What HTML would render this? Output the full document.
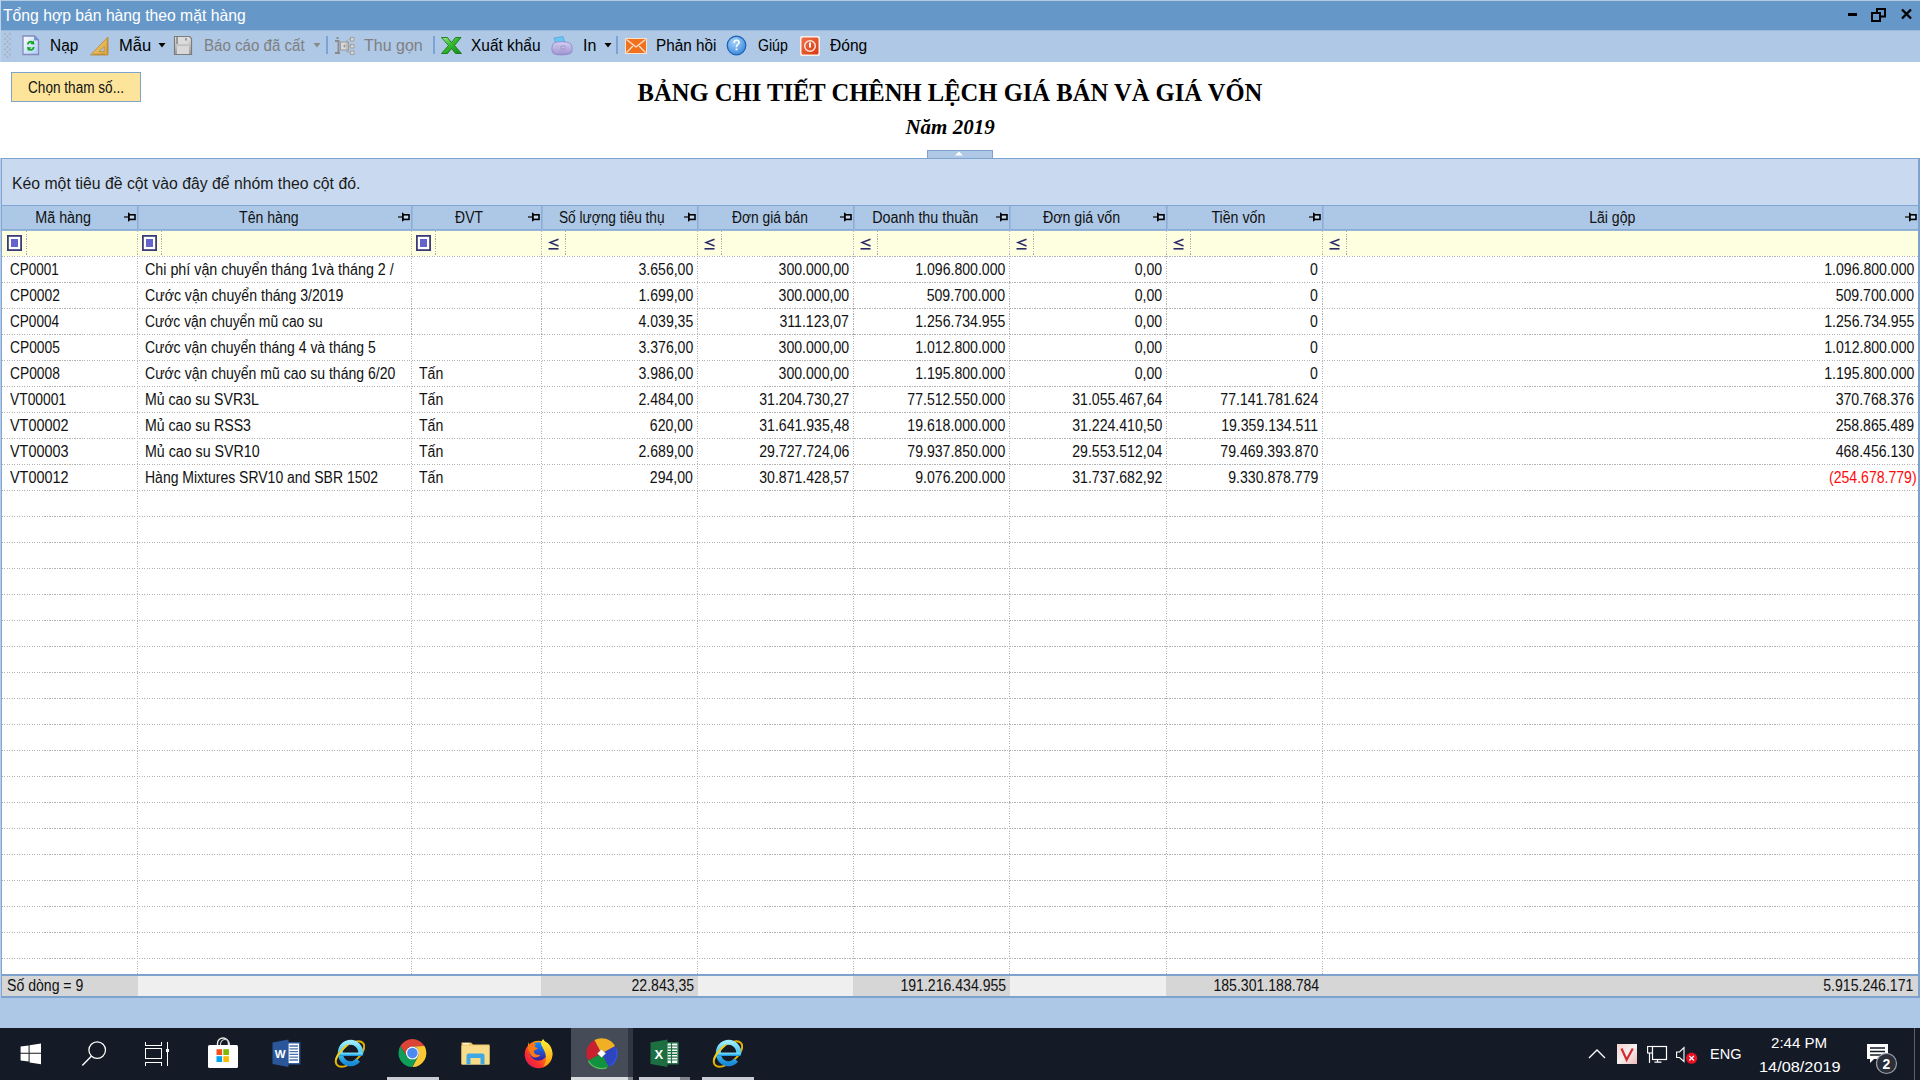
<!DOCTYPE html><html><head><meta charset="utf-8"><title>Tổng hợp bán hàng theo mặt hàng</title><style>
*{margin:0;padding:0;box-sizing:border-box}
html,body{width:1920px;height:1080px;overflow:hidden;background:#fff;font-family:"Liberation Sans", sans-serif;}
.a{position:absolute}
.t{position:absolute;white-space:nowrap;line-height:20px;height:20px}
</style></head><body>
<div class="a" style="left:0;top:0;width:1920px;height:1px;background:#b4cbe6"></div>
<div class="a" style="left:0;top:1px;width:1920px;height:29px;background:#6597c8"></div>
<div class="t" style="left:3px;top:5.28px;text-align:left;font-size:16.5px;color:#fff;"><span style="display:inline-block;transform:scaleX(0.952);transform-origin:0 50%">Tổng hợp bán hàng theo mặt hàng</span></div>
<div class="a" style="left:1848px;top:13px;width:9px;height:3px;background:#000"></div>
<svg class="a" style="left:1870px;top:7px" width="17" height="15" viewBox="0 0 17 15"><rect x="7" y="2" width="8" height="7.5" fill="none" stroke="#000" stroke-width="2"/><rect x="2" y="6" width="8" height="8" fill="#6597c8" stroke="#000" stroke-width="2"/></svg>
<svg class="a" style="left:1900px;top:8px" width="13" height="12" viewBox="0 0 13 12"><path d="M2 1.5L11 10.5M11 1.5L2 10.5" stroke="#000" stroke-width="2.4"/></svg>
<div class="a" style="left:0;top:30px;width:1920px;height:32px;background:#aec8e6"></div>
<div class="a" style="left:0;top:30px;width:1920px;height:1px;background:#9db9dc"></div>
<svg class="a" style="left:0;top:0" width="14" height="62"><rect x="4.2" y="33.0" width="1.6" height="1.6" fill="#a39c98" opacity="0.65"/><rect x="9.2" y="33.0" width="1.6" height="1.6" fill="#a39c98" opacity="0.65"/><rect x="6.7" y="35.6" width="1.6" height="1.6" fill="#a39c98" opacity="0.65"/><rect x="4.2" y="38.2" width="1.6" height="1.6" fill="#a39c98" opacity="0.65"/><rect x="9.2" y="38.2" width="1.6" height="1.6" fill="#a39c98" opacity="0.65"/><rect x="6.7" y="40.8" width="1.6" height="1.6" fill="#a39c98" opacity="0.65"/><rect x="4.2" y="43.4" width="1.6" height="1.6" fill="#a39c98" opacity="0.65"/><rect x="9.2" y="43.4" width="1.6" height="1.6" fill="#a39c98" opacity="0.65"/><rect x="6.7" y="46.0" width="1.6" height="1.6" fill="#a39c98" opacity="0.65"/><rect x="4.2" y="48.6" width="1.6" height="1.6" fill="#a39c98" opacity="0.65"/><rect x="9.2" y="48.6" width="1.6" height="1.6" fill="#a39c98" opacity="0.65"/><rect x="6.7" y="51.2" width="1.6" height="1.6" fill="#a39c98" opacity="0.65"/><rect x="4.2" y="53.8" width="1.6" height="1.6" fill="#a39c98" opacity="0.65"/><rect x="9.2" y="53.8" width="1.6" height="1.6" fill="#a39c98" opacity="0.65"/><rect x="6.7" y="56.4" width="1.6" height="1.6" fill="#a39c98" opacity="0.65"/></svg>
<svg class="a" style="left:22px;top:35px" width="18" height="21" viewBox="0 0 18 21"><defs><linearGradient id="dg" x1="0" y1="0" x2="1" y2="1"><stop offset="0" stop-color="#ffffff"/><stop offset="1" stop-color="#a8cdf5"/></linearGradient></defs><path d="M1 1H12.5L16.5 5V19.5H1Z" fill="url(#dg)" stroke="#8589bd" stroke-width="1.3"/><path d="M12.5 1V5H16.5" fill="#5a9ee8" stroke="#8589bd" stroke-width="0.8"/><path d="M5 9.5C5 6 9 5 11 6.5L11.5 5L12.5 9.5L8 9L9.6 7.8C8 7 6.8 8 6.8 9.5Z" fill="#12a21c"/><path d="M12.5 12C12.5 15.5 8.5 16.5 6.5 15L6 16.5L5 12L9.5 12.5L7.9 13.7C9.5 14.5 10.7 13.5 10.7 12Z" fill="#12a21c"/></svg>
<div class="t" style="left:50px;top:36.46px;text-align:left;font-size:16px;color:#000;"><span style="display:inline-block;transform:scaleX(0.9643);transform-origin:0 50%">Nạp</span></div>
<svg class="a" style="left:90px;top:36px" width="19" height="20" viewBox="0 0 19 20"><defs><linearGradient id="rg" x1="0" y1="0" x2="1" y2="1"><stop offset="0" stop-color="#f6d77a"/><stop offset="1" stop-color="#d9a13c"/></linearGradient></defs><path d="M18 1V19H0.5Z" fill="url(#rg)" stroke="#b98a3a" stroke-width="0.9"/><path d="M14.2 10.5V15.5H9.2Z" fill="#aec8e6" stroke="#b98a3a" stroke-width="0.8"/><path d="M16.5 4H18M16.5 6H18M16.5 8H18M16.5 10H18M16.5 12H18M16.5 14H18M16.5 16H18M4 17.5V19M6 17.5V19M8 17.5V19M10 17.5V19M12 17.5V19M14 17.5V19" stroke="#9c6a22" stroke-width="0.6"/></svg>
<div class="t" style="left:119px;top:36.46px;text-align:left;font-size:16px;color:#000;"><span style="display:inline-block;transform:scaleX(1.0345);transform-origin:0 50%">Mẫu</span></div>
<svg class="a" style="left:158px;top:43px" width="9" height="5"><path d="M0.5 0H7.5L4 4.5Z" fill="#000"/></svg>
<svg class="a" style="left:173px;top:35px" width="20" height="21" viewBox="0 0 20 21"><defs><linearGradient id="sg" x1="0" y1="0" x2="0" y2="1"><stop offset="0" stop-color="#e8e8e8"/><stop offset="1" stop-color="#9a9a9a"/></linearGradient></defs><path d="M1.5 1.5H16.5L18.5 3.5V19.5H1.5Z" fill="url(#sg)" stroke="#7c7c7c" stroke-width="1.2"/><rect x="3" y="2" width="2" height="7" fill="#9a9a9a"/><rect x="5.5" y="2" width="9.5" height="7" fill="#dcdcdc"/><rect x="12" y="3" width="2" height="2.5" fill="#9a9a9a"/><rect x="4" y="11" width="12" height="8" fill="#d8d8d8"/></svg>
<div class="t" style="left:204px;top:36.46px;text-align:left;font-size:16px;color:#7f7f7f;"><span style="display:inline-block;transform:scaleX(0.9429);transform-origin:0 50%">Báo cáo đã cất</span></div>
<svg class="a" style="left:313px;top:43px" width="9" height="5"><path d="M0.5 0H7.5L4 4.5Z" fill="#8a8a8a"/></svg>
<div class="a" style="left:326px;top:36px;width:2px;height:18px;background:#7ba3d6"></div>
<svg class="a" style="left:334px;top:36px" width="21" height="20" viewBox="0 0 21 20"><rect x="2.5" y="1" width="2" height="2" fill="#8a8a8a"/><path d="M1 5H4.5V17H1M1 17H6" fill="none" stroke="#8a8a8a" stroke-width="1.8"/><rect x="6.5" y="6" width="8" height="8" fill="#d8d8d8" stroke="#9a9a9a"/><path d="M9 10H12M10.5 8.5V11.5" stroke="#9a9a9a"/><path d="M14.5 3H17M13 4V16H17M14.5 10H17" fill="none" stroke="#a0a0a0"/><rect x="16.5" y="1.5" width="3.5" height="3.5" fill="#d8d8d8" stroke="#a0a0a0"/><rect x="16.5" y="8.5" width="3.5" height="3.5" fill="#d8d8d8" stroke="#a0a0a0"/><rect x="16.5" y="15" width="3.5" height="3.5" fill="#d8d8d8" stroke="#a0a0a0"/></svg>
<div class="t" style="left:364px;top:36.46px;text-align:left;font-size:16px;color:#7f7f7f;"><span style="display:inline-block;transform:scaleX(1.0);transform-origin:0 50%">Thu gọn</span></div>
<div class="a" style="left:433px;top:36px;width:2px;height:18px;background:#7ba3d6"></div>
<svg class="a" style="left:441px;top:37px" width="21" height="17" viewBox="0 0 21 17"><defs><linearGradient id="xg" x1="0" y1="0" x2="1" y2="1"><stop offset="0" stop-color="#9fe88a"/><stop offset="0.5" stop-color="#2fb52a"/><stop offset="1" stop-color="#168a16"/></linearGradient></defs><path d="M0.5 0.5H6.5L10.5 5.5L14.5 0.5H20L13.5 8.5L20.5 16.5H14.5L10.5 11.5L6.5 16.5H0.5L7.5 8.5Z" fill="url(#xg)" stroke="#157a17" stroke-width="0.9"/></svg>
<div class="t" style="left:471px;top:36.46px;text-align:left;font-size:16px;color:#000;"><span style="display:inline-block;transform:scaleX(0.9648);transform-origin:0 50%">Xuất khẩu</span></div>
<svg class="a" style="left:551px;top:36px" width="22" height="20" viewBox="0 0 22 20"><defs><linearGradient id="pg" x1="0" y1="0" x2="0" y2="1"><stop offset="0" stop-color="#d6d0f2"/><stop offset="1" stop-color="#9c92cf"/></linearGradient></defs><path d="M3 2L12 0.5L14 6.5L5 8Z" fill="#6cc4f2" stroke="#3b9fe0" stroke-width="0.6"/><path d="M2 8C4 5 17 5 20 8C21.5 11 21.5 15 20 17C17 19.5 4 19.5 2 17C0.5 15 0.5 11 2 8Z" fill="url(#pg)" stroke="#8e84c4" stroke-width="0.8"/><path d="M6 8.5V17" stroke="#b8b0e0" stroke-width="1"/><path d="M10 10H14V13H10Z" fill="#c6bfe8" stroke="#8a80c0" stroke-width="0.6"/></svg>
<div class="t" style="left:583px;top:36.46px;text-align:left;font-size:16px;color:#000;"><span style="display:inline-block;transform:scaleX(1.0);transform-origin:0 50%">In</span></div>
<svg class="a" style="left:604px;top:43px" width="9" height="5"><path d="M0.5 0H7.5L4 4.5Z" fill="#000"/></svg>
<div class="a" style="left:616px;top:36px;width:2px;height:18px;background:#7ba3d6"></div>
<svg class="a" style="left:625px;top:38px" width="22" height="16" viewBox="0 0 22 16"><rect x="0.5" y="0.5" width="21" height="15" fill="#f0721e" stroke="#f7e2d0" stroke-width="1"/><path d="M1.5 1.5L11 9L20.5 1.5M1.5 14.5L8 8M20.5 14.5L14 8" stroke="#fde7d6" stroke-width="1.1" fill="none"/></svg>
<div class="t" style="left:656px;top:36.46px;text-align:left;font-size:16px;color:#000;"><span style="display:inline-block;transform:scaleX(0.9549);transform-origin:0 50%">Phản hồi</span></div>
<svg class="a" style="left:726px;top:35px" width="21" height="21" viewBox="0 0 21 21"><defs><radialGradient id="hg" cx="0.4" cy="0.3" r="0.8"><stop offset="0" stop-color="#a9d6fb"/><stop offset="1" stop-color="#2f80da"/></radialGradient></defs><circle cx="10.5" cy="10.5" r="9.3" fill="url(#hg)" stroke="#1d5fb0" stroke-width="1.2"/><path d="M7.2 7.8C7.2 5.6 8.8 4.6 10.6 4.6C12.6 4.6 13.9 5.8 13.9 7.4C13.9 9.6 11.2 9.8 11.2 12.2H9.7C9.7 9.3 12.2 9 12.2 7.5C12.2 6.6 11.6 6 10.6 6C9.6 6 8.9 6.6 8.9 7.8Z" fill="#fff"/><rect x="9.6" y="13.5" width="1.8" height="1.8" fill="#fff"/></svg>
<div class="t" style="left:758px;top:36.46px;text-align:left;font-size:16px;color:#000;"><span style="display:inline-block;transform:scaleX(0.8824);transform-origin:0 50%">Giúp</span></div>
<svg class="a" style="left:800px;top:36px" width="20" height="20" viewBox="0 0 20 20"><rect x="0" y="0" width="20" height="20" rx="2" fill="#f6f0ec"/><defs><linearGradient id="cg" x1="0" y1="0" x2="1" y2="1"><stop offset="0" stop-color="#f0704a"/><stop offset="1" stop-color="#d83a10"/></linearGradient></defs><rect x="1.5" y="1.5" width="17" height="17" rx="1.5" fill="url(#cg)"/><circle cx="10" cy="10" r="5.3" fill="none" stroke="#fde6dc" stroke-width="1.5"/><rect x="9" y="6.5" width="2" height="5" fill="#fff"/></svg>
<div class="t" style="left:830px;top:36.46px;text-align:left;font-size:16px;color:#000;"><span style="display:inline-block;transform:scaleX(0.973);transform-origin:0 50%">Đóng</span></div>
<div class="a" style="left:11px;top:72px;width:130px;height:30px;background:#fde49b;border:1px solid #7ea3d0"></div>
<div class="t" style="left:28px;top:78.46px;text-align:left;font-size:16px;color:#111;"><span style="display:inline-block;transform:scaleX(0.85);transform-origin:0 50%">Chọn tham số...</span></div>
<div class="a" style="left:0;top:78px;width:1900px;text-align:center;white-space:nowrap;font-family:'Liberation Serif', serif;font-weight:bold;font-size:24.6px;line-height:30px;color:#000"><span style="position:relative;left:0px">BẢNG CHI TIẾT CHÊNH LỆCH GIÁ BÁN VÀ GIÁ VỐN</span></div>
<div class="a" style="left:0;top:113.5px;width:1900px;text-align:center;white-space:nowrap;font-family:'Liberation Serif', serif;font-weight:bold;font-style:italic;font-size:21px;line-height:26px;color:#000">Năm 2019</div>
<div class="a" style="left:927px;top:150px;width:66px;height:9px;background:#aec8e6;border:1px solid #7da2ce;border-bottom:none"></div>
<svg class="a" style="left:955px;top:151px" width="9" height="5"><path d="M0 4.5H8L4 0.5Z" fill="#fff"/></svg>
<div class="a" style="left:0;top:158px;width:1920px;height:2px;background:#7da2ce"></div>
<div class="a" style="left:1px;top:159px;width:1918px;height:46px;background:#c9daf0"></div>
<div class="t" style="left:12px;top:174.46px;text-align:left;font-size:16px;color:#1a1a1a;"><span style="display:inline-block;transform:scaleX(0.9864);transform-origin:0 50%">Kéo một tiêu đề cột vào đây để nhóm theo cột đó.</span></div>
<div class="a" style="left:1px;top:205px;width:1918px;height:1px;background:#80a5d2"></div>
<div class="a" style="left:1px;top:206px;width:1918px;height:23px;background:#adc8e6"></div>
<div class="a" style="left:1px;top:229px;width:1918px;height:1px;background:#88abd8"></div>
<div class="a" style="left:1px;top:230px;width:1918px;height:1px;background:#9ab7d8"></div>
<div class="t" style="left:2.3px;top:208.46px;width:122px;text-align:center;font-size:16px;color:#111;"><span style="display:inline-block;transform:scaleX(0.8968);transform-origin:50% 50%">Mã hàng</span></div>
<svg class="a" style="left:124px;top:212px" width="12" height="10" viewBox="0 0 12 10"><path d="M0 5H4" stroke="#222" stroke-width="1.4"/><path d="M4 0.2L5.8 1.6V8.4L4 9.8Z" fill="#000"/><rect x="5" y="2.8" width="6" height="4.6" fill="#c2d6ee" stroke="#000" stroke-width="1.6"/></svg>
<div class="a" style="left:137px;top:206px;width:2px;height:24px;background:linear-gradient(to right,#86a7d4,#9fbde0)"></div>
<div class="t" style="left:137.98px;top:208.46px;width:261px;text-align:center;font-size:16px;color:#111;"><span style="display:inline-block;transform:scaleX(0.8801);transform-origin:50% 50%">Tên hàng</span></div>
<svg class="a" style="left:398px;top:212px" width="12" height="10" viewBox="0 0 12 10"><path d="M0 5H4" stroke="#222" stroke-width="1.4"/><path d="M4 0.2L5.8 1.6V8.4L4 9.8Z" fill="#000"/><rect x="5" y="2.8" width="6" height="4.6" fill="#c2d6ee" stroke="#000" stroke-width="1.6"/></svg>
<div class="a" style="left:411px;top:206px;width:2px;height:24px;background:linear-gradient(to right,#86a7d4,#9fbde0)"></div>
<div class="t" style="left:410.0px;top:208.46px;width:117px;text-align:center;font-size:16px;color:#111;"><span style="display:inline-block;transform:scaleX(0.8679);transform-origin:50% 50%">ĐVT</span></div>
<svg class="a" style="left:528px;top:212px" width="12" height="10" viewBox="0 0 12 10"><path d="M0 5H4" stroke="#222" stroke-width="1.4"/><path d="M4 0.2L5.8 1.6V8.4L4 9.8Z" fill="#000"/><rect x="5" y="2.8" width="6" height="4.6" fill="#c2d6ee" stroke="#000" stroke-width="1.6"/></svg>
<div class="a" style="left:541px;top:206px;width:2px;height:24px;background:linear-gradient(to right,#86a7d4,#9fbde0)"></div>
<div class="t" style="left:540.5px;top:208.46px;width:143px;text-align:center;font-size:16px;color:#111;"><span style="display:inline-block;transform:scaleX(0.8553);transform-origin:50% 50%">Số lượng tiêu thụ</span></div>
<svg class="a" style="left:684px;top:212px" width="12" height="10" viewBox="0 0 12 10"><path d="M0 5H4" stroke="#222" stroke-width="1.4"/><path d="M4 0.2L5.8 1.6V8.4L4 9.8Z" fill="#000"/><rect x="5" y="2.8" width="6" height="4.6" fill="#c2d6ee" stroke="#000" stroke-width="1.6"/></svg>
<div class="a" style="left:697px;top:206px;width:2px;height:24px;background:linear-gradient(to right,#86a7d4,#9fbde0)"></div>
<div class="t" style="left:698.2px;top:208.46px;width:143px;text-align:center;font-size:16px;color:#111;"><span style="display:inline-block;transform:scaleX(0.8619);transform-origin:50% 50%">Đơn giá bán</span></div>
<svg class="a" style="left:840px;top:212px" width="12" height="10" viewBox="0 0 12 10"><path d="M0 5H4" stroke="#222" stroke-width="1.4"/><path d="M4 0.2L5.8 1.6V8.4L4 9.8Z" fill="#000"/><rect x="5" y="2.8" width="6" height="4.6" fill="#c2d6ee" stroke="#000" stroke-width="1.6"/></svg>
<div class="a" style="left:853px;top:206px;width:2px;height:24px;background:linear-gradient(to right,#86a7d4,#9fbde0)"></div>
<div class="t" style="left:854.1px;top:208.46px;width:143px;text-align:center;font-size:16px;color:#111;"><span style="display:inline-block;transform:scaleX(0.8955);transform-origin:50% 50%">Doanh thu thuần</span></div>
<svg class="a" style="left:996px;top:212px" width="12" height="10" viewBox="0 0 12 10"><path d="M0 5H4" stroke="#222" stroke-width="1.4"/><path d="M4 0.2L5.8 1.6V8.4L4 9.8Z" fill="#000"/><rect x="5" y="2.8" width="6" height="4.6" fill="#c2d6ee" stroke="#000" stroke-width="1.6"/></svg>
<div class="a" style="left:1009px;top:206px;width:2px;height:24px;background:linear-gradient(to right,#86a7d4,#9fbde0)"></div>
<div class="t" style="left:1009.9px;top:208.46px;width:144px;text-align:center;font-size:16px;color:#111;"><span style="display:inline-block;transform:scaleX(0.8874);transform-origin:50% 50%">Đơn giá vốn</span></div>
<svg class="a" style="left:1153px;top:212px" width="12" height="10" viewBox="0 0 12 10"><path d="M0 5H4" stroke="#222" stroke-width="1.4"/><path d="M4 0.2L5.8 1.6V8.4L4 9.8Z" fill="#000"/><rect x="5" y="2.8" width="6" height="4.6" fill="#c2d6ee" stroke="#000" stroke-width="1.6"/></svg>
<div class="a" style="left:1166px;top:206px;width:2px;height:24px;background:linear-gradient(to right,#86a7d4,#9fbde0)"></div>
<div class="t" style="left:1167.2px;top:208.46px;width:143px;text-align:center;font-size:16px;color:#111;"><span style="display:inline-block;transform:scaleX(0.8873);transform-origin:50% 50%">Tiền vốn</span></div>
<svg class="a" style="left:1309px;top:212px" width="12" height="10" viewBox="0 0 12 10"><path d="M0 5H4" stroke="#222" stroke-width="1.4"/><path d="M4 0.2L5.8 1.6V8.4L4 9.8Z" fill="#000"/><rect x="5" y="2.8" width="6" height="4.6" fill="#c2d6ee" stroke="#000" stroke-width="1.6"/></svg>
<div class="a" style="left:1322px;top:206px;width:2px;height:24px;background:linear-gradient(to right,#86a7d4,#9fbde0)"></div>
<div class="t" style="left:1321.0px;top:208.46px;width:583px;text-align:center;font-size:16px;color:#111;"><span style="display:inline-block;transform:scaleX(0.8807);transform-origin:50% 50%">Lãi gộp</span></div>
<svg class="a" style="left:1905px;top:212px" width="12" height="10" viewBox="0 0 12 10"><path d="M0 5H4" stroke="#222" stroke-width="1.4"/><path d="M4 0.2L5.8 1.6V8.4L4 9.8Z" fill="#000"/><rect x="5" y="2.8" width="6" height="4.6" fill="#c2d6ee" stroke="#000" stroke-width="1.6"/></svg>
<div class="a" style="left:1px;top:231px;width:1918px;height:25px;background:#fefee0"></div>
<svg class="a" style="left:7px;top:235px" width="15" height="16"><rect x="0.9" y="0.9" width="13.2" height="14.2" fill="#fff" stroke="#3b3b78" stroke-width="1.8"/><rect x="4" y="4" width="7" height="8" fill="#6464cc"/></svg>
<div class="a" style="left:26px;top:231px;width:1px;height:24px;background:repeating-linear-gradient(to bottom,#a8a8a8 0 1px,transparent 1px 2.5px,#a8a8a8 2.5px 3.5px,transparent 3.5px 5px)"></div>
<svg class="a" style="left:142px;top:235px" width="15" height="16"><rect x="0.9" y="0.9" width="13.2" height="14.2" fill="#fff" stroke="#3b3b78" stroke-width="1.8"/><rect x="4" y="4" width="7" height="8" fill="#6464cc"/></svg>
<div class="a" style="left:161px;top:231px;width:1px;height:24px;background:repeating-linear-gradient(to bottom,#a8a8a8 0 1px,transparent 1px 2.5px,#a8a8a8 2.5px 3.5px,transparent 3.5px 5px)"></div>
<div class="a" style="left:137px;top:231px;width:1px;height:25px;background:repeating-linear-gradient(to bottom,#b8b8b8 0 1px,transparent 1px 2.5px,#b8b8b8 2.5px 3.5px,transparent 3.5px 5px)"></div>
<svg class="a" style="left:416px;top:235px" width="15" height="16"><rect x="0.9" y="0.9" width="13.2" height="14.2" fill="#fff" stroke="#3b3b78" stroke-width="1.8"/><rect x="4" y="4" width="7" height="8" fill="#6464cc"/></svg>
<div class="a" style="left:435px;top:231px;width:1px;height:24px;background:repeating-linear-gradient(to bottom,#a8a8a8 0 1px,transparent 1px 2.5px,#a8a8a8 2.5px 3.5px,transparent 3.5px 5px)"></div>
<div class="a" style="left:411px;top:231px;width:1px;height:25px;background:repeating-linear-gradient(to bottom,#b8b8b8 0 1px,transparent 1px 2.5px,#b8b8b8 2.5px 3.5px,transparent 3.5px 5px)"></div>
<svg class="a" style="left:548px;top:238px" width="12" height="12" viewBox="0 0 12 12"><path d="M10.5 1.2L1.8 4.5L10.5 8" fill="none" stroke="#2a2a66" stroke-width="1.5"/><path d="M0.5 10.8H10.5" stroke="#2a2a66" stroke-width="1.6"/></svg>
<div class="a" style="left:565px;top:231px;width:1px;height:24px;background:repeating-linear-gradient(to bottom,#a8a8a8 0 1px,transparent 1px 2.5px,#a8a8a8 2.5px 3.5px,transparent 3.5px 5px)"></div>
<div class="a" style="left:541px;top:231px;width:1px;height:25px;background:repeating-linear-gradient(to bottom,#b8b8b8 0 1px,transparent 1px 2.5px,#b8b8b8 2.5px 3.5px,transparent 3.5px 5px)"></div>
<svg class="a" style="left:704px;top:238px" width="12" height="12" viewBox="0 0 12 12"><path d="M10.5 1.2L1.8 4.5L10.5 8" fill="none" stroke="#2a2a66" stroke-width="1.5"/><path d="M0.5 10.8H10.5" stroke="#2a2a66" stroke-width="1.6"/></svg>
<div class="a" style="left:721px;top:231px;width:1px;height:24px;background:repeating-linear-gradient(to bottom,#a8a8a8 0 1px,transparent 1px 2.5px,#a8a8a8 2.5px 3.5px,transparent 3.5px 5px)"></div>
<div class="a" style="left:697px;top:231px;width:1px;height:25px;background:repeating-linear-gradient(to bottom,#b8b8b8 0 1px,transparent 1px 2.5px,#b8b8b8 2.5px 3.5px,transparent 3.5px 5px)"></div>
<svg class="a" style="left:860px;top:238px" width="12" height="12" viewBox="0 0 12 12"><path d="M10.5 1.2L1.8 4.5L10.5 8" fill="none" stroke="#2a2a66" stroke-width="1.5"/><path d="M0.5 10.8H10.5" stroke="#2a2a66" stroke-width="1.6"/></svg>
<div class="a" style="left:877px;top:231px;width:1px;height:24px;background:repeating-linear-gradient(to bottom,#a8a8a8 0 1px,transparent 1px 2.5px,#a8a8a8 2.5px 3.5px,transparent 3.5px 5px)"></div>
<div class="a" style="left:853px;top:231px;width:1px;height:25px;background:repeating-linear-gradient(to bottom,#b8b8b8 0 1px,transparent 1px 2.5px,#b8b8b8 2.5px 3.5px,transparent 3.5px 5px)"></div>
<svg class="a" style="left:1016px;top:238px" width="12" height="12" viewBox="0 0 12 12"><path d="M10.5 1.2L1.8 4.5L10.5 8" fill="none" stroke="#2a2a66" stroke-width="1.5"/><path d="M0.5 10.8H10.5" stroke="#2a2a66" stroke-width="1.6"/></svg>
<div class="a" style="left:1033px;top:231px;width:1px;height:24px;background:repeating-linear-gradient(to bottom,#a8a8a8 0 1px,transparent 1px 2.5px,#a8a8a8 2.5px 3.5px,transparent 3.5px 5px)"></div>
<div class="a" style="left:1009px;top:231px;width:1px;height:25px;background:repeating-linear-gradient(to bottom,#b8b8b8 0 1px,transparent 1px 2.5px,#b8b8b8 2.5px 3.5px,transparent 3.5px 5px)"></div>
<svg class="a" style="left:1173px;top:238px" width="12" height="12" viewBox="0 0 12 12"><path d="M10.5 1.2L1.8 4.5L10.5 8" fill="none" stroke="#2a2a66" stroke-width="1.5"/><path d="M0.5 10.8H10.5" stroke="#2a2a66" stroke-width="1.6"/></svg>
<div class="a" style="left:1190px;top:231px;width:1px;height:24px;background:repeating-linear-gradient(to bottom,#a8a8a8 0 1px,transparent 1px 2.5px,#a8a8a8 2.5px 3.5px,transparent 3.5px 5px)"></div>
<div class="a" style="left:1166px;top:231px;width:1px;height:25px;background:repeating-linear-gradient(to bottom,#b8b8b8 0 1px,transparent 1px 2.5px,#b8b8b8 2.5px 3.5px,transparent 3.5px 5px)"></div>
<svg class="a" style="left:1329px;top:238px" width="12" height="12" viewBox="0 0 12 12"><path d="M10.5 1.2L1.8 4.5L10.5 8" fill="none" stroke="#2a2a66" stroke-width="1.5"/><path d="M0.5 10.8H10.5" stroke="#2a2a66" stroke-width="1.6"/></svg>
<div class="a" style="left:1346px;top:231px;width:1px;height:24px;background:repeating-linear-gradient(to bottom,#a8a8a8 0 1px,transparent 1px 2.5px,#a8a8a8 2.5px 3.5px,transparent 3.5px 5px)"></div>
<div class="a" style="left:1322px;top:231px;width:1px;height:25px;background:repeating-linear-gradient(to bottom,#b8b8b8 0 1px,transparent 1px 2.5px,#b8b8b8 2.5px 3.5px,transparent 3.5px 5px)"></div>
<div class="a" style="left:2px;top:256px;width:1916px;height:1px;background:repeating-linear-gradient(to right,#b2b2b2 0 1px,transparent 1px 2.5px,#b2b2b2 2.5px 3.5px,transparent 3.5px 5px)"></div>
<div class="a" style="left:2px;top:282px;width:1916px;height:1px;background:repeating-linear-gradient(to right,#b2b2b2 0 1px,transparent 1px 2.5px,#b2b2b2 2.5px 3.5px,transparent 3.5px 5px)"></div>
<div class="a" style="left:2px;top:308px;width:1916px;height:1px;background:repeating-linear-gradient(to right,#b2b2b2 0 1px,transparent 1px 2.5px,#b2b2b2 2.5px 3.5px,transparent 3.5px 5px)"></div>
<div class="a" style="left:2px;top:334px;width:1916px;height:1px;background:repeating-linear-gradient(to right,#b2b2b2 0 1px,transparent 1px 2.5px,#b2b2b2 2.5px 3.5px,transparent 3.5px 5px)"></div>
<div class="a" style="left:2px;top:360px;width:1916px;height:1px;background:repeating-linear-gradient(to right,#b2b2b2 0 1px,transparent 1px 2.5px,#b2b2b2 2.5px 3.5px,transparent 3.5px 5px)"></div>
<div class="a" style="left:2px;top:386px;width:1916px;height:1px;background:repeating-linear-gradient(to right,#b2b2b2 0 1px,transparent 1px 2.5px,#b2b2b2 2.5px 3.5px,transparent 3.5px 5px)"></div>
<div class="a" style="left:2px;top:412px;width:1916px;height:1px;background:repeating-linear-gradient(to right,#b2b2b2 0 1px,transparent 1px 2.5px,#b2b2b2 2.5px 3.5px,transparent 3.5px 5px)"></div>
<div class="a" style="left:2px;top:438px;width:1916px;height:1px;background:repeating-linear-gradient(to right,#b2b2b2 0 1px,transparent 1px 2.5px,#b2b2b2 2.5px 3.5px,transparent 3.5px 5px)"></div>
<div class="a" style="left:2px;top:464px;width:1916px;height:1px;background:repeating-linear-gradient(to right,#b2b2b2 0 1px,transparent 1px 2.5px,#b2b2b2 2.5px 3.5px,transparent 3.5px 5px)"></div>
<div class="a" style="left:2px;top:490px;width:1916px;height:1px;background:repeating-linear-gradient(to right,#b2b2b2 0 1px,transparent 1px 2.5px,#b2b2b2 2.5px 3.5px,transparent 3.5px 5px)"></div>
<div class="a" style="left:2px;top:516px;width:1916px;height:1px;background:repeating-linear-gradient(to right,#b2b2b2 0 1px,transparent 1px 2.5px,#b2b2b2 2.5px 3.5px,transparent 3.5px 5px)"></div>
<div class="a" style="left:2px;top:542px;width:1916px;height:1px;background:repeating-linear-gradient(to right,#b2b2b2 0 1px,transparent 1px 2.5px,#b2b2b2 2.5px 3.5px,transparent 3.5px 5px)"></div>
<div class="a" style="left:2px;top:568px;width:1916px;height:1px;background:repeating-linear-gradient(to right,#b2b2b2 0 1px,transparent 1px 2.5px,#b2b2b2 2.5px 3.5px,transparent 3.5px 5px)"></div>
<div class="a" style="left:2px;top:594px;width:1916px;height:1px;background:repeating-linear-gradient(to right,#b2b2b2 0 1px,transparent 1px 2.5px,#b2b2b2 2.5px 3.5px,transparent 3.5px 5px)"></div>
<div class="a" style="left:2px;top:620px;width:1916px;height:1px;background:repeating-linear-gradient(to right,#b2b2b2 0 1px,transparent 1px 2.5px,#b2b2b2 2.5px 3.5px,transparent 3.5px 5px)"></div>
<div class="a" style="left:2px;top:646px;width:1916px;height:1px;background:repeating-linear-gradient(to right,#b2b2b2 0 1px,transparent 1px 2.5px,#b2b2b2 2.5px 3.5px,transparent 3.5px 5px)"></div>
<div class="a" style="left:2px;top:672px;width:1916px;height:1px;background:repeating-linear-gradient(to right,#b2b2b2 0 1px,transparent 1px 2.5px,#b2b2b2 2.5px 3.5px,transparent 3.5px 5px)"></div>
<div class="a" style="left:2px;top:698px;width:1916px;height:1px;background:repeating-linear-gradient(to right,#b2b2b2 0 1px,transparent 1px 2.5px,#b2b2b2 2.5px 3.5px,transparent 3.5px 5px)"></div>
<div class="a" style="left:2px;top:724px;width:1916px;height:1px;background:repeating-linear-gradient(to right,#b2b2b2 0 1px,transparent 1px 2.5px,#b2b2b2 2.5px 3.5px,transparent 3.5px 5px)"></div>
<div class="a" style="left:2px;top:750px;width:1916px;height:1px;background:repeating-linear-gradient(to right,#b2b2b2 0 1px,transparent 1px 2.5px,#b2b2b2 2.5px 3.5px,transparent 3.5px 5px)"></div>
<div class="a" style="left:2px;top:776px;width:1916px;height:1px;background:repeating-linear-gradient(to right,#b2b2b2 0 1px,transparent 1px 2.5px,#b2b2b2 2.5px 3.5px,transparent 3.5px 5px)"></div>
<div class="a" style="left:2px;top:802px;width:1916px;height:1px;background:repeating-linear-gradient(to right,#b2b2b2 0 1px,transparent 1px 2.5px,#b2b2b2 2.5px 3.5px,transparent 3.5px 5px)"></div>
<div class="a" style="left:2px;top:828px;width:1916px;height:1px;background:repeating-linear-gradient(to right,#b2b2b2 0 1px,transparent 1px 2.5px,#b2b2b2 2.5px 3.5px,transparent 3.5px 5px)"></div>
<div class="a" style="left:2px;top:854px;width:1916px;height:1px;background:repeating-linear-gradient(to right,#b2b2b2 0 1px,transparent 1px 2.5px,#b2b2b2 2.5px 3.5px,transparent 3.5px 5px)"></div>
<div class="a" style="left:2px;top:880px;width:1916px;height:1px;background:repeating-linear-gradient(to right,#b2b2b2 0 1px,transparent 1px 2.5px,#b2b2b2 2.5px 3.5px,transparent 3.5px 5px)"></div>
<div class="a" style="left:2px;top:906px;width:1916px;height:1px;background:repeating-linear-gradient(to right,#b2b2b2 0 1px,transparent 1px 2.5px,#b2b2b2 2.5px 3.5px,transparent 3.5px 5px)"></div>
<div class="a" style="left:2px;top:932px;width:1916px;height:1px;background:repeating-linear-gradient(to right,#b2b2b2 0 1px,transparent 1px 2.5px,#b2b2b2 2.5px 3.5px,transparent 3.5px 5px)"></div>
<div class="a" style="left:2px;top:958px;width:1916px;height:1px;background:repeating-linear-gradient(to right,#b2b2b2 0 1px,transparent 1px 2.5px,#b2b2b2 2.5px 3.5px,transparent 3.5px 5px)"></div>
<div class="a" style="left:2px;top:984px;width:1916px;height:1px;background:repeating-linear-gradient(to right,#b2b2b2 0 1px,transparent 1px 2.5px,#b2b2b2 2.5px 3.5px,transparent 3.5px 5px)"></div>
<div class="a" style="left:137px;top:256px;width:1px;height:718px;background:repeating-linear-gradient(to bottom,#b2b2b2 0 1px,transparent 1px 2.5px,#b2b2b2 2.5px 3.5px,transparent 3.5px 5px)"></div>
<div class="a" style="left:411px;top:256px;width:1px;height:718px;background:repeating-linear-gradient(to bottom,#b2b2b2 0 1px,transparent 1px 2.5px,#b2b2b2 2.5px 3.5px,transparent 3.5px 5px)"></div>
<div class="a" style="left:541px;top:256px;width:1px;height:718px;background:repeating-linear-gradient(to bottom,#b2b2b2 0 1px,transparent 1px 2.5px,#b2b2b2 2.5px 3.5px,transparent 3.5px 5px)"></div>
<div class="a" style="left:697px;top:256px;width:1px;height:718px;background:repeating-linear-gradient(to bottom,#b2b2b2 0 1px,transparent 1px 2.5px,#b2b2b2 2.5px 3.5px,transparent 3.5px 5px)"></div>
<div class="a" style="left:853px;top:256px;width:1px;height:718px;background:repeating-linear-gradient(to bottom,#b2b2b2 0 1px,transparent 1px 2.5px,#b2b2b2 2.5px 3.5px,transparent 3.5px 5px)"></div>
<div class="a" style="left:1009px;top:256px;width:1px;height:718px;background:repeating-linear-gradient(to bottom,#b2b2b2 0 1px,transparent 1px 2.5px,#b2b2b2 2.5px 3.5px,transparent 3.5px 5px)"></div>
<div class="a" style="left:1166px;top:256px;width:1px;height:718px;background:repeating-linear-gradient(to bottom,#b2b2b2 0 1px,transparent 1px 2.5px,#b2b2b2 2.5px 3.5px,transparent 3.5px 5px)"></div>
<div class="a" style="left:1322px;top:256px;width:1px;height:718px;background:repeating-linear-gradient(to bottom,#b2b2b2 0 1px,transparent 1px 2.5px,#b2b2b2 2.5px 3.5px,transparent 3.5px 5px)"></div>
<div class="t" style="left:10px;top:260.46px;text-align:left;font-size:16px;color:#111;"><span style="display:inline-block;transform:scaleX(0.8425);transform-origin:0 50%">CP0001</span></div>
<div class="t" style="left:145px;top:260.46px;text-align:left;font-size:16px;color:#111;"><span style="display:inline-block;transform:scaleX(0.8933);transform-origin:0 50%">Chi phí vận chuyển tháng 1và tháng 2 /</span></div>
<div class="t" style="left:541px;top:260.46px;width:152px;text-align:right;font-size:16px;color:#111;"><span style="display:inline-block;transform:scaleX(0.88);transform-origin:100% 50%">3.656,00</span></div>
<div class="t" style="left:697px;top:260.46px;width:152px;text-align:right;font-size:16px;color:#111;"><span style="display:inline-block;transform:scaleX(0.88);transform-origin:100% 50%">300.000,00</span></div>
<div class="t" style="left:853px;top:260.46px;width:152px;text-align:right;font-size:16px;color:#111;"><span style="display:inline-block;transform:scaleX(0.88);transform-origin:100% 50%">1.096.800.000</span></div>
<div class="t" style="left:1009px;top:260.46px;width:153px;text-align:right;font-size:16px;color:#111;"><span style="display:inline-block;transform:scaleX(0.88);transform-origin:100% 50%">0,00</span></div>
<div class="t" style="left:1166px;top:260.46px;width:152px;text-align:right;font-size:16px;color:#111;"><span style="display:inline-block;transform:scaleX(0.88);transform-origin:100% 50%">0</span></div>
<div class="t" style="left:1322px;top:260.46px;width:592px;text-align:right;font-size:16px;color:#111;"><span style="display:inline-block;transform:scaleX(0.88);transform-origin:100% 50%">1.096.800.000</span></div>
<div class="t" style="left:10px;top:286.46px;text-align:left;font-size:16px;color:#111;"><span style="display:inline-block;transform:scaleX(0.8628);transform-origin:0 50%">CP0002</span></div>
<div class="t" style="left:145px;top:286.46px;text-align:left;font-size:16px;color:#111;"><span style="display:inline-block;transform:scaleX(0.8821);transform-origin:0 50%">Cước vận chuyển tháng 3/2019</span></div>
<div class="t" style="left:541px;top:286.46px;width:152px;text-align:right;font-size:16px;color:#111;"><span style="display:inline-block;transform:scaleX(0.88);transform-origin:100% 50%">1.699,00</span></div>
<div class="t" style="left:697px;top:286.46px;width:152px;text-align:right;font-size:16px;color:#111;"><span style="display:inline-block;transform:scaleX(0.88);transform-origin:100% 50%">300.000,00</span></div>
<div class="t" style="left:853px;top:286.46px;width:152px;text-align:right;font-size:16px;color:#111;"><span style="display:inline-block;transform:scaleX(0.88);transform-origin:100% 50%">509.700.000</span></div>
<div class="t" style="left:1009px;top:286.46px;width:153px;text-align:right;font-size:16px;color:#111;"><span style="display:inline-block;transform:scaleX(0.88);transform-origin:100% 50%">0,00</span></div>
<div class="t" style="left:1166px;top:286.46px;width:152px;text-align:right;font-size:16px;color:#111;"><span style="display:inline-block;transform:scaleX(0.88);transform-origin:100% 50%">0</span></div>
<div class="t" style="left:1322px;top:286.46px;width:592px;text-align:right;font-size:16px;color:#111;"><span style="display:inline-block;transform:scaleX(0.88);transform-origin:100% 50%">509.700.000</span></div>
<div class="t" style="left:10px;top:312.46px;text-align:left;font-size:16px;color:#111;"><span style="display:inline-block;transform:scaleX(0.8487);transform-origin:0 50%">CP0004</span></div>
<div class="t" style="left:145px;top:312.46px;text-align:left;font-size:16px;color:#111;"><span style="display:inline-block;transform:scaleX(0.866);transform-origin:0 50%">Cước vận chuyển mũ cao su</span></div>
<div class="t" style="left:541px;top:312.46px;width:152px;text-align:right;font-size:16px;color:#111;"><span style="display:inline-block;transform:scaleX(0.88);transform-origin:100% 50%">4.039,35</span></div>
<div class="t" style="left:697px;top:312.46px;width:152px;text-align:right;font-size:16px;color:#111;"><span style="display:inline-block;transform:scaleX(0.88);transform-origin:100% 50%">311.123,07</span></div>
<div class="t" style="left:853px;top:312.46px;width:152px;text-align:right;font-size:16px;color:#111;"><span style="display:inline-block;transform:scaleX(0.88);transform-origin:100% 50%">1.256.734.955</span></div>
<div class="t" style="left:1009px;top:312.46px;width:153px;text-align:right;font-size:16px;color:#111;"><span style="display:inline-block;transform:scaleX(0.88);transform-origin:100% 50%">0,00</span></div>
<div class="t" style="left:1166px;top:312.46px;width:152px;text-align:right;font-size:16px;color:#111;"><span style="display:inline-block;transform:scaleX(0.88);transform-origin:100% 50%">0</span></div>
<div class="t" style="left:1322px;top:312.46px;width:592px;text-align:right;font-size:16px;color:#111;"><span style="display:inline-block;transform:scaleX(0.88);transform-origin:100% 50%">1.256.734.955</span></div>
<div class="t" style="left:10px;top:338.46px;text-align:left;font-size:16px;color:#111;"><span style="display:inline-block;transform:scaleX(0.8628);transform-origin:0 50%">CP0005</span></div>
<div class="t" style="left:145px;top:338.46px;text-align:left;font-size:16px;color:#111;"><span style="display:inline-block;transform:scaleX(0.8736);transform-origin:0 50%">Cước vận chuyển tháng 4 và tháng 5</span></div>
<div class="t" style="left:541px;top:338.46px;width:152px;text-align:right;font-size:16px;color:#111;"><span style="display:inline-block;transform:scaleX(0.88);transform-origin:100% 50%">3.376,00</span></div>
<div class="t" style="left:697px;top:338.46px;width:152px;text-align:right;font-size:16px;color:#111;"><span style="display:inline-block;transform:scaleX(0.88);transform-origin:100% 50%">300.000,00</span></div>
<div class="t" style="left:853px;top:338.46px;width:152px;text-align:right;font-size:16px;color:#111;"><span style="display:inline-block;transform:scaleX(0.88);transform-origin:100% 50%">1.012.800.000</span></div>
<div class="t" style="left:1009px;top:338.46px;width:153px;text-align:right;font-size:16px;color:#111;"><span style="display:inline-block;transform:scaleX(0.88);transform-origin:100% 50%">0,00</span></div>
<div class="t" style="left:1166px;top:338.46px;width:152px;text-align:right;font-size:16px;color:#111;"><span style="display:inline-block;transform:scaleX(0.88);transform-origin:100% 50%">0</span></div>
<div class="t" style="left:1322px;top:338.46px;width:592px;text-align:right;font-size:16px;color:#111;"><span style="display:inline-block;transform:scaleX(0.88);transform-origin:100% 50%">1.012.800.000</span></div>
<div class="t" style="left:10px;top:364.46px;text-align:left;font-size:16px;color:#111;"><span style="display:inline-block;transform:scaleX(0.8628);transform-origin:0 50%">CP0008</span></div>
<div class="t" style="left:145px;top:364.46px;text-align:left;font-size:16px;color:#111;"><span style="display:inline-block;transform:scaleX(0.877);transform-origin:0 50%">Cước vận chuyển mũ cao su tháng 6/20</span></div>
<div class="t" style="left:419px;top:364.46px;text-align:left;font-size:16px;color:#111;"><span style="display:inline-block;transform:scaleX(0.88);transform-origin:0 50%">Tấn</span></div>
<div class="t" style="left:541px;top:364.46px;width:152px;text-align:right;font-size:16px;color:#111;"><span style="display:inline-block;transform:scaleX(0.88);transform-origin:100% 50%">3.986,00</span></div>
<div class="t" style="left:697px;top:364.46px;width:152px;text-align:right;font-size:16px;color:#111;"><span style="display:inline-block;transform:scaleX(0.88);transform-origin:100% 50%">300.000,00</span></div>
<div class="t" style="left:853px;top:364.46px;width:152px;text-align:right;font-size:16px;color:#111;"><span style="display:inline-block;transform:scaleX(0.88);transform-origin:100% 50%">1.195.800.000</span></div>
<div class="t" style="left:1009px;top:364.46px;width:153px;text-align:right;font-size:16px;color:#111;"><span style="display:inline-block;transform:scaleX(0.88);transform-origin:100% 50%">0,00</span></div>
<div class="t" style="left:1166px;top:364.46px;width:152px;text-align:right;font-size:16px;color:#111;"><span style="display:inline-block;transform:scaleX(0.88);transform-origin:100% 50%">0</span></div>
<div class="t" style="left:1322px;top:364.46px;width:592px;text-align:right;font-size:16px;color:#111;"><span style="display:inline-block;transform:scaleX(0.88);transform-origin:100% 50%">1.195.800.000</span></div>
<div class="t" style="left:10px;top:390.46px;text-align:left;font-size:16px;color:#111;"><span style="display:inline-block;transform:scaleX(0.8634);transform-origin:0 50%">VT00001</span></div>
<div class="t" style="left:145px;top:390.46px;text-align:left;font-size:16px;color:#111;"><span style="display:inline-block;transform:scaleX(0.8827);transform-origin:0 50%">Mủ cao su SVR3L</span></div>
<div class="t" style="left:419px;top:390.46px;text-align:left;font-size:16px;color:#111;"><span style="display:inline-block;transform:scaleX(0.88);transform-origin:0 50%">Tấn</span></div>
<div class="t" style="left:541px;top:390.46px;width:152px;text-align:right;font-size:16px;color:#111;"><span style="display:inline-block;transform:scaleX(0.88);transform-origin:100% 50%">2.484,00</span></div>
<div class="t" style="left:697px;top:390.46px;width:152px;text-align:right;font-size:16px;color:#111;"><span style="display:inline-block;transform:scaleX(0.88);transform-origin:100% 50%">31.204.730,27</span></div>
<div class="t" style="left:853px;top:390.46px;width:152px;text-align:right;font-size:16px;color:#111;"><span style="display:inline-block;transform:scaleX(0.88);transform-origin:100% 50%">77.512.550.000</span></div>
<div class="t" style="left:1009px;top:390.46px;width:153px;text-align:right;font-size:16px;color:#111;"><span style="display:inline-block;transform:scaleX(0.88);transform-origin:100% 50%">31.055.467,64</span></div>
<div class="t" style="left:1166px;top:390.46px;width:152px;text-align:right;font-size:16px;color:#111;"><span style="display:inline-block;transform:scaleX(0.88);transform-origin:100% 50%">77.141.781.624</span></div>
<div class="t" style="left:1322px;top:390.46px;width:592px;text-align:right;font-size:16px;color:#111;"><span style="display:inline-block;transform:scaleX(0.88);transform-origin:100% 50%">370.768.376</span></div>
<div class="t" style="left:10px;top:416.46px;text-align:left;font-size:16px;color:#111;"><span style="display:inline-block;transform:scaleX(0.899);transform-origin:0 50%">VT00002</span></div>
<div class="t" style="left:145px;top:416.46px;text-align:left;font-size:16px;color:#111;"><span style="display:inline-block;transform:scaleX(0.8825);transform-origin:0 50%">Mủ cao su RSS3</span></div>
<div class="t" style="left:419px;top:416.46px;text-align:left;font-size:16px;color:#111;"><span style="display:inline-block;transform:scaleX(0.88);transform-origin:0 50%">Tấn</span></div>
<div class="t" style="left:541px;top:416.46px;width:152px;text-align:right;font-size:16px;color:#111;"><span style="display:inline-block;transform:scaleX(0.88);transform-origin:100% 50%">620,00</span></div>
<div class="t" style="left:697px;top:416.46px;width:152px;text-align:right;font-size:16px;color:#111;"><span style="display:inline-block;transform:scaleX(0.88);transform-origin:100% 50%">31.641.935,48</span></div>
<div class="t" style="left:853px;top:416.46px;width:152px;text-align:right;font-size:16px;color:#111;"><span style="display:inline-block;transform:scaleX(0.88);transform-origin:100% 50%">19.618.000.000</span></div>
<div class="t" style="left:1009px;top:416.46px;width:153px;text-align:right;font-size:16px;color:#111;"><span style="display:inline-block;transform:scaleX(0.88);transform-origin:100% 50%">31.224.410,50</span></div>
<div class="t" style="left:1166px;top:416.46px;width:152px;text-align:right;font-size:16px;color:#111;"><span style="display:inline-block;transform:scaleX(0.88);transform-origin:100% 50%">19.359.134.511</span></div>
<div class="t" style="left:1322px;top:416.46px;width:592px;text-align:right;font-size:16px;color:#111;"><span style="display:inline-block;transform:scaleX(0.88);transform-origin:100% 50%">258.865.489</span></div>
<div class="t" style="left:10px;top:442.46px;text-align:left;font-size:16px;color:#111;"><span style="display:inline-block;transform:scaleX(0.899);transform-origin:0 50%">VT00003</span></div>
<div class="t" style="left:145px;top:442.46px;text-align:left;font-size:16px;color:#111;"><span style="display:inline-block;transform:scaleX(0.8889);transform-origin:0 50%">Mủ cao su SVR10</span></div>
<div class="t" style="left:419px;top:442.46px;text-align:left;font-size:16px;color:#111;"><span style="display:inline-block;transform:scaleX(0.88);transform-origin:0 50%">Tấn</span></div>
<div class="t" style="left:541px;top:442.46px;width:152px;text-align:right;font-size:16px;color:#111;"><span style="display:inline-block;transform:scaleX(0.88);transform-origin:100% 50%">2.689,00</span></div>
<div class="t" style="left:697px;top:442.46px;width:152px;text-align:right;font-size:16px;color:#111;"><span style="display:inline-block;transform:scaleX(0.88);transform-origin:100% 50%">29.727.724,06</span></div>
<div class="t" style="left:853px;top:442.46px;width:152px;text-align:right;font-size:16px;color:#111;"><span style="display:inline-block;transform:scaleX(0.88);transform-origin:100% 50%">79.937.850.000</span></div>
<div class="t" style="left:1009px;top:442.46px;width:153px;text-align:right;font-size:16px;color:#111;"><span style="display:inline-block;transform:scaleX(0.88);transform-origin:100% 50%">29.553.512,04</span></div>
<div class="t" style="left:1166px;top:442.46px;width:152px;text-align:right;font-size:16px;color:#111;"><span style="display:inline-block;transform:scaleX(0.88);transform-origin:100% 50%">79.469.393.870</span></div>
<div class="t" style="left:1322px;top:442.46px;width:592px;text-align:right;font-size:16px;color:#111;"><span style="display:inline-block;transform:scaleX(0.88);transform-origin:100% 50%">468.456.130</span></div>
<div class="t" style="left:10px;top:468.46px;text-align:left;font-size:16px;color:#111;"><span style="display:inline-block;transform:scaleX(0.899);transform-origin:0 50%">VT00012</span></div>
<div class="t" style="left:145px;top:468.46px;text-align:left;font-size:16px;color:#111;"><span style="display:inline-block;transform:scaleX(0.8745);transform-origin:0 50%">Hàng Mixtures SRV10 and SBR 1502</span></div>
<div class="t" style="left:419px;top:468.46px;text-align:left;font-size:16px;color:#111;"><span style="display:inline-block;transform:scaleX(0.88);transform-origin:0 50%">Tấn</span></div>
<div class="t" style="left:541px;top:468.46px;width:152px;text-align:right;font-size:16px;color:#111;"><span style="display:inline-block;transform:scaleX(0.88);transform-origin:100% 50%">294,00</span></div>
<div class="t" style="left:697px;top:468.46px;width:152px;text-align:right;font-size:16px;color:#111;"><span style="display:inline-block;transform:scaleX(0.88);transform-origin:100% 50%">30.871.428,57</span></div>
<div class="t" style="left:853px;top:468.46px;width:152px;text-align:right;font-size:16px;color:#111;"><span style="display:inline-block;transform:scaleX(0.88);transform-origin:100% 50%">9.076.200.000</span></div>
<div class="t" style="left:1009px;top:468.46px;width:153px;text-align:right;font-size:16px;color:#111;"><span style="display:inline-block;transform:scaleX(0.88);transform-origin:100% 50%">31.737.682,92</span></div>
<div class="t" style="left:1166px;top:468.46px;width:152px;text-align:right;font-size:16px;color:#111;"><span style="display:inline-block;transform:scaleX(0.88);transform-origin:100% 50%">9.330.878.779</span></div>
<div class="t" style="left:1322px;top:468.46px;width:595px;text-align:right;font-size:16px;color:#ff0a0a;"><span style="display:inline-block;transform:scaleX(0.88);transform-origin:100% 50%">(254.678.779)</span></div>
<div class="a" style="left:0;top:158px;width:1px;height:870px;background:#b6cce8"></div>
<div class="a" style="left:1px;top:158px;width:1px;height:840px;background:#7fa5d2"></div>
<div class="a" style="left:0;top:0;width:1px;height:62px;background:#bcd1ea"></div>
<div class="a" style="left:1918px;top:158px;width:2px;height:840px;background:#7da2ce"></div>
<div class="a" style="left:1px;top:974px;width:1918px;height:2px;background:#7da2ce"></div>
<div class="a" style="left:2px;top:976px;width:1916px;height:20px;background:#efefef"></div>
<div class="a" style="left:2px;top:976px;width:136px;height:20px;background:#d6d6d6"></div>
<div class="a" style="left:541px;top:976px;width:157px;height:20px;background:#d6d6d6"></div>
<div class="a" style="left:853px;top:976px;width:157px;height:20px;background:#d6d6d6"></div>
<div class="a" style="left:1166px;top:976px;width:157px;height:20px;background:#d6d6d6"></div>
<div class="a" style="left:1322px;top:976px;width:596px;height:20px;background:#d6d6d6"></div>
<div class="a" style="left:1px;top:996px;width:1918px;height:2px;background:#7da2ce"></div>
<div class="t" style="left:7px;top:976.46px;text-align:left;font-size:16px;color:#111;"><span style="display:inline-block;transform:scaleX(0.88);transform-origin:0 50%">Số dòng = 9</span></div>
<div class="t" style="left:541px;top:976.46px;width:153px;text-align:right;font-size:16px;color:#111;"><span style="display:inline-block;transform:scaleX(0.88);transform-origin:100% 50%">22.843,35</span></div>
<div class="t" style="left:853px;top:976.46px;width:153px;text-align:right;font-size:16px;color:#111;"><span style="display:inline-block;transform:scaleX(0.88);transform-origin:100% 50%">191.216.434.955</span></div>
<div class="t" style="left:1166px;top:976.46px;width:153px;text-align:right;font-size:16px;color:#111;"><span style="display:inline-block;transform:scaleX(0.88);transform-origin:100% 50%">185.301.188.784</span></div>
<div class="t" style="left:1322px;top:976.46px;width:591px;text-align:right;font-size:16px;color:#111;"><span style="display:inline-block;transform:scaleX(0.88);transform-origin:100% 50%">5.915.246.171</span></div>
<div class="a" style="left:0;top:998px;width:1920px;height:30px;background:#adc8e6"></div>
<div class="a" style="left:0;top:1028px;width:1920px;height:52px;background:#141a26"></div>
<div class="a" style="left:571px;top:1028px;width:57px;height:52px;background:#454b57"></div>
<div class="a" style="left:628px;top:1028px;width:5px;height:52px;background:#2f3542"></div>
<div class="a" style="left:387px;top:1077px;width:52px;height:3px;background:#c9ccd3"></div>
<div class="a" style="left:571px;top:1077px;width:57px;height:3px;background:#d8dbe0"></div>
<div class="a" style="left:628px;top:1077px;width:5px;height:3px;background:#80848c"></div>
<div class="a" style="left:639px;top:1077px;width:41px;height:3px;background:#c9ccd3"></div>
<div class="a" style="left:680px;top:1077px;width:10px;height:3px;background:#80848c"></div>
<div class="a" style="left:702px;top:1077px;width:52px;height:3px;background:#c9ccd3"></div>
<svg class="a" style="left:20px;top:1043px" width="22" height="22" viewBox="0 0 22 22"><path d="M0.6 3.6L8.6 2.5V9.8H0.6Z M9.6 2.3L21 0.6V9.8H9.6Z M0.6 10.8H8.6V18.4L0.6 17.4Z M9.6 10.8H21V21.3L9.6 19.6Z" fill="#fff"/></svg>
<svg class="a" style="left:81px;top:1041px" width="27" height="27" viewBox="0 0 27 27"><circle cx="16.2" cy="9.1" r="8.3" fill="none" stroke="#fff" stroke-width="1.25"/><path d="M10.3 15.2L1.3 24.4" stroke="#fff" stroke-width="1.4"/></svg>
<svg class="a" style="left:144px;top:1041px" width="26" height="26" viewBox="0 0 26 26" shape-rendering="crispEdges"><path d="M1.5 1V4.5H17.5V1M1.5 25V21.5H17.5V25" fill="none" stroke="#fff" stroke-width="1"/><rect x="1.5" y="7.5" width="16" height="10" fill="none" stroke="#fff" stroke-width="1"/><path d="M23.5 1V25" stroke="#fff" stroke-width="1"/><rect x="22" y="8" width="3" height="3" fill="#fff"/></svg>
<svg class="a" style="left:207px;top:1037px" width="32" height="32" viewBox="0 0 32 32"><path d="M10.5 9V6.5a5.5 5.5 0 0 1 11 0V9" fill="none" stroke="#e8e8e8" stroke-width="1.4"/><path d="M13.5 9V7a4.5 4.5 0 0 1 9 0V9" fill="none" stroke="#cfcfcf" stroke-width="1.1"/><rect x="1" y="8" width="30" height="23" rx="1.5" fill="#fff"/><rect x="9.5" y="12.2" width="5.6" height="5.8" fill="#f25022"/><rect x="16.3" y="12.2" width="5.6" height="5.8" fill="#7fba00"/><rect x="9.5" y="19.2" width="5.6" height="5.8" fill="#00a4ef"/><rect x="16.3" y="19.2" width="5.6" height="5.8" fill="#ffb900"/></svg>
<svg class="a" style="left:272px;top:1039px" width="29" height="29" viewBox="0 0 29 29"><rect x="15.5" y="3.8" width="12.2" height="21" fill="#fff" stroke="#2b579a" stroke-width="1.4"/><path d="M17.5 7H26M17.5 9.8H26M17.5 12.6H26M17.5 15.4H26M17.5 18.2H26M17.5 21H26" stroke="#4a72b0" stroke-width="1.3"/><path d="M0.5 3.5L16.5 0.5V28L0.5 25Z" fill="#2b579a"/><text x="8.2" y="19" font-family="Liberation Sans" font-weight="bold" font-size="11.5" fill="#fff" text-anchor="middle">W</text></svg>
<svg class="a" style="left:334px;top:1037px" width="31" height="32" viewBox="0 0 31 32"><defs><linearGradient id="ieg334" x1="0" y1="0" x2="0" y2="1"><stop offset="0" stop-color="#9cecff"/><stop offset="0.5" stop-color="#43c4f2"/><stop offset="1" stop-color="#1a8ad6"/></linearGradient><clipPath id="iec334"><path d="M0 0H20L0 26Z"/></clipPath></defs><ellipse cx="16" cy="17" rx="17" ry="8.6" transform="rotate(-40 16 17)" fill="none" stroke="#e2b000" stroke-width="2"/><path d="M26.6 17.6A10.2 10.8 0 1 0 24.1 23.2" fill="none" stroke="url(#ieg334)" stroke-width="5"/><rect x="5.5" y="15.6" width="23" height="3.4" fill="url(#ieg334)"/><g clip-path="url(#iec334)"><ellipse cx="16" cy="17" rx="17" ry="8.6" transform="rotate(-40 16 17)" fill="none" stroke="#f5c916" stroke-width="2"/></g></svg>
<svg class="a" style="left:397px;top:1038px" width="31" height="31" viewBox="0 0 31 31"><path d="M3.28 8.10A14.0 14.0 0 0 1 27.52 8.10L15.40 8.60A6.5 6.5 0 0 0 9.77 18.35Z" fill="#db4437"/><path d="M27.52 8.10A14.0 14.0 0 0 1 15.40 29.10L21.03 18.35A6.5 6.5 0 0 0 15.40 8.60Z" fill="#fcc934"/><path d="M15.40 29.10A14.0 14.0 0 0 1 3.28 8.10L9.77 18.35A6.5 6.5 0 0 0 21.03 18.35Z" fill="#0f9d58"/><circle cx="15.4" cy="15.1" r="6.5" fill="#fff"/><circle cx="15.4" cy="15.1" r="5.3" fill="#4d8af0"/></svg>
<svg class="a" style="left:461px;top:1041px" width="29" height="25" viewBox="0 0 29 25"><path d="M0.5 1.5H10L12 3.5H28.5V23.5H0.5Z" fill="#eec567"/><rect x="0.5" y="4.5" width="28" height="19" rx="0.8" fill="#f9dc8a"/><rect x="2" y="2.2" width="6" height="1.2" fill="#fff"/><path d="M5.5 23.5V14.5A2 2 0 0 1 7.5 12.5H21.5A2 2 0 0 1 23.5 14.5V23.5H19.5V17H9.5V23.5Z" fill="#3ea7e4"/></svg>
<svg class="a" style="left:515px;top:1032px" width="48" height="42" viewBox="0 0 48 42"><defs><linearGradient id="ffb" x1="0" y1="1" x2="1" y2="0"><stop offset="0" stop-color="#c2127a"/><stop offset="0.3" stop-color="#ff2d2d"/><stop offset="0.65" stop-color="#ff8a10"/><stop offset="1" stop-color="#ffd21a"/></linearGradient><linearGradient id="ffg" x1="0" y1="0" x2="0" y2="1"><stop offset="0" stop-color="#0a90ff"/><stop offset="1" stop-color="#3b1b9c"/></linearGradient><linearGradient id="fft" x1="0" y1="0" x2="0" y2="1"><stop offset="0" stop-color="#fff03a"/><stop offset="1" stop-color="#ff9c0a"/></linearGradient></defs><circle cx="23.5" cy="22.5" r="13.8" fill="url(#ffb)"/><circle cx="23.5" cy="19.5" r="9.2" fill="url(#ffg)"/><path d="M13 10L15 14C17 12 19.5 11.5 21 12L19.5 14.5L23 16.5L18.5 19L20 22C21.5 23 24 22.5 25.5 23.5C23 25.5 20 26 18 25C15 23 13.5 19 13 15Z" fill="#ff7a14"/><path d="M28 7L30 9.5C34 11 37.5 16 37.5 22C37.5 28 33.5 33 28 35C31 31 31.5 26 30.5 22C29.5 18 27 15 26 12C26 10 27 8 28 7Z" fill="url(#fft)"/></svg>
<svg class="a" style="left:586px;top:1038px" width="32" height="32" viewBox="0 0 32 32"><path d="M15.6 15.4L2.18 22.54A15.2 15.2 0 0 1 8.46 1.98Z" fill="#c8202e"/><path d="M15.6 15.4L8.46 1.98A15.2 15.2 0 0 1 29.02 8.26Z" fill="#f1b023"/><path d="M15.6 15.4L29.02 8.26A15.2 15.2 0 0 1 22.74 28.82Z" fill="#2e44c0"/><path d="M15.6 15.4L22.74 28.82A15.2 15.2 0 0 1 2.18 22.54Z" fill="#12913f"/><path d="M20.80 29.68A15.2 15.2 0 0 1 2.44 23.00" fill="none" stroke="#5cc05a" stroke-width="1.3"/><path d="M29.88 10.20A15.2 15.2 0 0 1 24.32 27.85" fill="none" stroke="#2a56f0" stroke-width="1.3"/><path d="M15.6 11.2L19.8 15.4L15.6 19.6L11.399999999999999 15.4Z" fill="#fff" stroke="#9a9a9a" stroke-width="0.5"/></svg>
<svg class="a" style="left:650px;top:1039px" width="29" height="29" viewBox="0 0 29 29"><rect x="16.5" y="3.8" width="11.5" height="21" fill="#fff" stroke="#1d6f42" stroke-width="1.4"/><path d="M17.5 7H27M17.5 9.8H27M17.5 12.6H27M17.5 15.4H27M17.5 18.2H27M17.5 21H27M21.5 4V24.5" stroke="#1d6f42" stroke-width="1.2"/><path d="M0.5 3.5L17.5 0.5V28L0.5 25Z" fill="#1d6f42"/><text x="8.8" y="19.5" font-family="Liberation Sans" font-weight="bold" font-size="13" fill="#fff" text-anchor="middle">X</text></svg>
<svg class="a" style="left:712px;top:1037px" width="31" height="32" viewBox="0 0 31 32"><defs><linearGradient id="ieg712" x1="0" y1="0" x2="0" y2="1"><stop offset="0" stop-color="#9cecff"/><stop offset="0.5" stop-color="#43c4f2"/><stop offset="1" stop-color="#1a8ad6"/></linearGradient><clipPath id="iec712"><path d="M0 0H20L0 26Z"/></clipPath></defs><ellipse cx="16" cy="17" rx="17" ry="8.6" transform="rotate(-40 16 17)" fill="none" stroke="#e2b000" stroke-width="2"/><path d="M26.6 17.6A10.2 10.8 0 1 0 24.1 23.2" fill="none" stroke="url(#ieg712)" stroke-width="5"/><rect x="5.5" y="15.6" width="23" height="3.4" fill="url(#ieg712)"/><g clip-path="url(#iec712)"><ellipse cx="16" cy="17" rx="17" ry="8.6" transform="rotate(-40 16 17)" fill="none" stroke="#f5c916" stroke-width="2"/></g></svg>
<svg class="a" style="left:1588px;top:1048px" width="18" height="11" viewBox="0 0 18 11"><path d="M1 10L9 2L17 10" fill="none" stroke="#fff" stroke-width="1.3"/></svg>
<svg class="a" style="left:1617px;top:1044px" width="20" height="20" viewBox="0 0 20 20"><defs><linearGradient id="vg" x1="0" y1="0" x2="1" y2="1"><stop offset="0" stop-color="#f7d0d0"/><stop offset="0.5" stop-color="#f4f0f0"/><stop offset="1" stop-color="#f2b8b8"/></linearGradient></defs><rect x="0" y="0" width="20" height="20" fill="url(#vg)"/><path d="M4.5 4.5L9.6 15.8L15.8 4.5" fill="none" stroke="#d42a30" stroke-width="2.2"/></svg>
<svg class="a" style="left:1646px;top:1045px" width="23" height="19" viewBox="0 0 23 19"><rect x="6.5" y="1.5" width="14" height="13" fill="none" stroke="#fff" stroke-width="1.2"/><path d="M11.5 15V17M8.5 17.2H15.5M3.5 8V18" stroke="#fff" stroke-width="1.2"/><rect x="1.6" y="1.5" width="4.8" height="6.5" fill="#141a26" stroke="#fff" stroke-width="1.1"/></svg>
<svg class="a" style="left:1675px;top:1046px" width="24" height="19" viewBox="0 0 24 19"><path d="M1.6 6H4.5L9 1.5V15.5L4.5 11.5H1.6Z" fill="none" stroke="#fff" stroke-width="1.1"/><circle cx="16.6" cy="12.2" r="5.6" fill="#e81123"/><path d="M14.3 9.9L18.9 14.5M18.9 9.9L14.3 14.5" stroke="#fff" stroke-width="1.3"/></svg>
<div class="t" style="left:1710px;top:1044px;font-size:14.5px;color:#fff">ENG</div>
<div class="t" style="left:1771px;top:1033px;font-size:14.5px;color:#fff"><span style="display:inline-block;transform:scaleX(1.04);transform-origin:0 50%">2:44 PM</span></div>
<div class="t" style="left:1759px;top:1057px;font-size:14.5px;color:#fff"><span style="display:inline-block;transform:scaleX(1.125);transform-origin:0 50%">14/08/2019</span></div>
<svg class="a" style="left:1866px;top:1043px" width="32" height="32" viewBox="0 0 32 32"><path d="M1 1H22V16H8L4 20V16H1Z" fill="#fff"/><path d="M4 5H19M4 8.5H19M4 12H15" stroke="#141a26" stroke-width="1.3"/><circle cx="20.5" cy="20.5" r="10" fill="#2a2f3a" stroke="#9a9ea6" stroke-width="1.2"/><text x="20.5" y="25.5" font-family="Liberation Sans" font-weight="bold" font-size="14" fill="#fff" text-anchor="middle">2</text></svg>
<div class="a" style="left:1914px;top:1028px;width:1px;height:52px;background:#5a5f6a"></div>
</body></html>
